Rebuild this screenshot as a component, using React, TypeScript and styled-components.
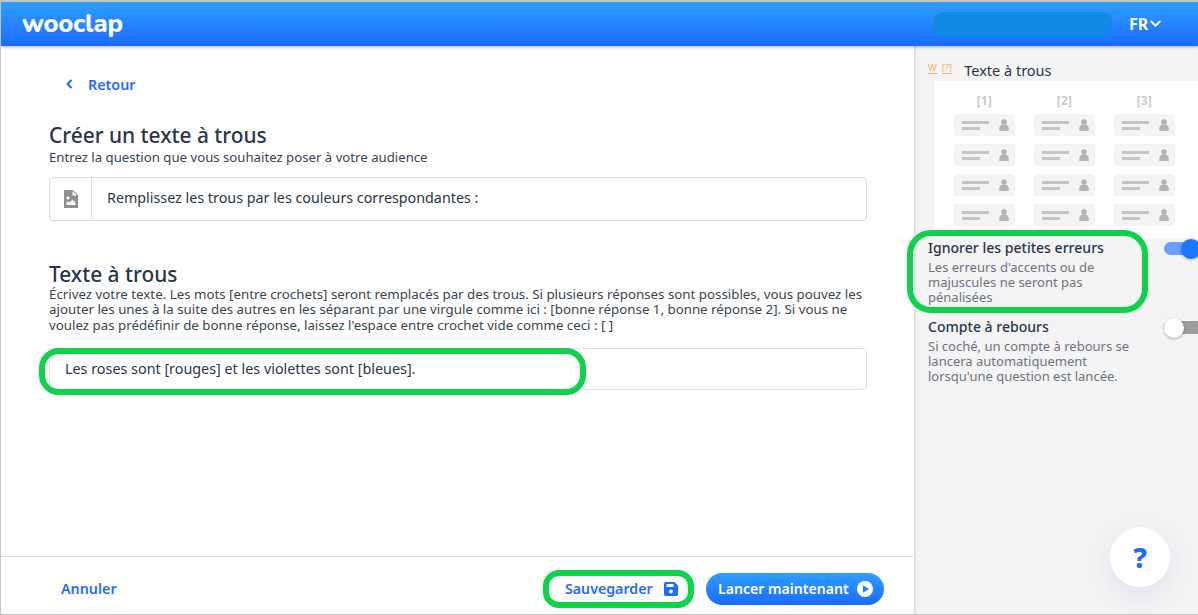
import React from "react";
import styled, { createGlobalStyle } from "styled-components";

const Global = createGlobalStyle`
  html, body { margin: 0; padding: 0; background: #fff; }
  * { box-sizing: border-box; }
  body { font-family: "Noto Sans", "Open Sans", sans-serif; color: #2a3547; }
`;

const Frame = styled.div`
  position: relative;
  width: 1198px;
  height: 615px;
  overflow: hidden;
  display: flex;
  flex-direction: column;
  border-top: 2px solid #c4c4c4;
  border-left: 1px solid #c4c4c4;
  border-bottom: 1px solid #c4c4c4;
`;

const Header = styled.header`
  position: relative;
  z-index: 3;
  height: 44px;
  flex: none;
  display: flex;
  align-items: center;
  padding-left: 21px;
  background: linear-gradient(#2f9fff, #1a6bff);
  box-shadow: 0 1px 3px rgba(0, 0, 0, 0.3);
`;

const Logo = styled.div`
  font-family: "Nunito", "Open Sans", sans-serif;
  font-weight: 800;
  font-size: 25.5px;
  letter-spacing: -0.2px;
  color: #fff;
  margin-top: -2px;
`;

const Pill = styled.div`
  width: 180px;
  height: 24px;
  border-radius: 12px;
  background: #118ae6;
  margin-left: auto;
`;

const Lang = styled.div`
  display: flex;
  align-items: center;
  gap: 2px;
  width: 85px;
  padding-left: 16px;
  color: #fff;
  font-weight: 700;
  font-size: 16px;
`;

const Body = styled.div`
  flex: 1;
  display: flex;
  min-height: 0;
`;

const Main = styled.main`
  width: 913px;
  flex: none;
  display: flex;
  flex-direction: column;
`;

const Content = styled.div`
  flex: 1;
  padding: 28px 47px 0 48px;
`;

const Back = styled.a`
  display: flex;
  align-items: center;
  height: 20px;
  margin-left: 17px;
  gap: 15px;
  color: #1f6bff;
  font-size: 14.3px;
  font-weight: 600;
`;

const Title = styled.h2`
  margin: 0;
  font-size: 20.9px;
  line-height: 25px;
  font-weight: 500;
  color: #2a3547;
`;

const FirstTitle = styled(Title)`
  margin-top: 29px;
`;

const SecondTitle = styled(Title)`
  margin-top: 41px;
`;

const Hint = styled.p`
  margin: 0;
  font-size: 13.2px;
  line-height: 15.5px;
  color: #3a4352;
`;

const FirstHint = styled(Hint)`
  margin-top: 2px;
`;

const LongHint = styled(Hint)`
  font-size: 13.3px;
`;

const QuestionBox = styled.div`
  display: flex;
  height: 44px;
  margin-top: 11px;
  border: 1px solid #dcdcdc;
  border-radius: 4px;
`;

const IconCell = styled.div`
  width: 42px;
  flex: none;
  display: flex;
  align-items: center;
  justify-content: center;
  border-right: 1px solid #dcdcdc;
`;

const QuestionText = styled.div`
  display: flex;
  align-items: center;
  padding: 0 0 2px 15px;
  font-size: 14.3px;
  color: #2a3547;
`;

const AnswerBox = styled.div`
  display: flex;
  align-items: center;
  height: 42px;
  margin-top: 15px;
  padding: 0 0 2px 15px;
  border: 1px solid #e2e2e2;
  border-radius: 4px;
  font-size: 14.35px;
  color: #2a3547;
`;

const Footer = styled.footer`
  height: 58px;
  flex: none;
  display: flex;
  align-items: center;
  padding: 6px 30px 0 60px;
  border-top: 1px solid #dcdcdc;
`;

const Cancel = styled.a`
  color: #1f6bff;
  font-size: 14.3px;
  font-weight: 600;
  margin-right: auto;
`;

const SaveButton = styled.button`
  display: flex;
  align-items: center;
  justify-content: space-between;
  width: 138px;
  height: 32px;
  padding: 0 9px 0 14px;
  background: #fff;
  border: 1px solid #e3e3e3;
  border-radius: 16px;
  font: 600 14.2px "Noto Sans", sans-serif;
  color: #1f6bff;
`;

const RunButton = styled.button`
  display: flex;
  align-items: center;
  justify-content: space-between;
  width: 178px;
  height: 32px;
  margin-left: 18px;
  padding: 0 11px 0 12px;
  background: linear-gradient(#2f9fff, #1a6bff);
  border: 0;
  border-radius: 16px;
  font: 600 14.1px "Noto Sans", sans-serif;
  color: #fff;
`;

const Side = styled.aside`
  flex: 1;
  min-width: 0;
  position: relative;
  background: #f4f4f4;
  box-shadow: inset 3px 0 3px -2px rgba(0, 0, 0, 0.16);
  padding-top: 13px;
`;

const SideHead = styled.div`
  display: flex;
  align-items: center;
  height: 22px;
  padding-left: 14px;
`;

const Mark = styled.span`
  font-size: 9.5px;
  line-height: 11px;
  color: #f3b26b;
  border-bottom: 1px solid #f3b26b;
  margin-right: 5px;
  margin-top: -4px;
`;

const SideTitle = styled.span`
  font-size: 14.5px;
  margin-left: 7px;
  color: #2a3547;
`;

const Preview = styled.div`
  display: grid;
  grid-template-columns: repeat(3, 61px);
  align-content: start;
  column-gap: 19px;
  row-gap: 8px;
  width: 264px;
  height: 157px;
  margin-left: 20px;
  padding: 11px 20px 0;
  background: #fff;
`;

const PreviewLabel = styled.div`
  height: 14px;
  text-align: center;
  font-size: 11.5px;
  line-height: 18px;
  font-weight: 700;
  letter-spacing: 0.5px;
  color: #c6c8cc;
`;

const PreviewCard = styled.div`
  position: relative;
  height: 22px;
  background: #f4f4f4;
  border-radius: 3px;
  display: flex;
  align-items: center;
  justify-content: space-between;
  padding: 0 6px 0 8px;
`;

const Lines = styled.div`
  display: flex;
  flex-direction: column;
  gap: 3px;
`;

const Line = styled.div<{ $w: number }>`
  height: 3px;
  width: ${(p) => p.$w}px;
  background: #c4c5c8;
`;

const Option = styled.div`
  position: relative;
  padding: 0 0 0 14px;
  width: 100%;
`;

const OptionTitle = styled.div`
  font-size: 14.05px;
  line-height: 18px;
  font-weight: 500;
  color: #2a3547;
`;

const OptionText = styled.div`
  font-size: 13px;
  line-height: 15px;
  width: 205px;
  margin-top: 3px;
  color: #6c7380;
`;

const FirstOption = styled(Option)`
  margin-top: 1px;
`;

const SecondOption = styled(Option)`
  margin-top: 13px;
`;

const Track = styled.div<{ $on: boolean }>`
  position: absolute;
  left: 250px;
  top: 3px;
  width: 40px;
  height: 13px;
  border-radius: 7px;
  background: ${(p) => (p.$on ? "#6b9fff" : "#9c9c9c")};
`;

const Knob = styled.div<{ $on: boolean }>`
  position: absolute;
  left: ${(p) => (p.$on ? 17 : 0)}px;
  top: -3.5px;
  width: 20px;
  height: 20px;
  border-radius: 50%;
  background: ${(p) => (p.$on ? "#1a78ff" : "#fff")};
  box-shadow: 0 1px 3px rgba(0, 0, 0, 0.3);
`;

const Help = styled.div`
  position: absolute;
  left: 196px;
  top: 481px;
  width: 60px;
  height: 60px;
  border-radius: 50%;
  background: #fff;
  display: flex;
  align-items: center;
  justify-content: center;
  color: #1a6bff;
  font-size: 28px;
  font-weight: 800;
  box-shadow: 0 8px 24px rgba(80, 90, 220, 0.12);
`;

const Ring = styled.div<{ $x: number; $y: number; $w: number; $h: number; $r: number }>`
  position: absolute;
  z-index: 5;
  left: ${(p) => p.$x}px;
  top: ${(p) => p.$y}px;
  width: ${(p) => p.$w}px;
  height: ${(p) => p.$h}px;
  border: 6.5px solid #0fd14a;
  border-radius: ${(p) => p.$r}px;
  pointer-events: none;
`;

const Person = () => (
  <svg width="10" height="12" viewBox="0 0 10 12">
    <circle cx="5" cy="3" r="2.8" fill="#b3b4b8" />
    <path d="M0.3 12V9.2C0.3 6.8 2.4 5.2 5 5.2s4.7 1.6 4.7 4V12z" fill="#b3b4b8" />
  </svg>
);

const columns = ["[1]", "[2]", "[3]"];
const rows = [0, 1, 2, 3];

export default function App() {
  return (
    <>
      <Global />
      <Frame>
        <Header>
          <Logo>wooclap</Logo>
          <Pill />
          <Lang>
            FR
            <svg width="11" height="8" viewBox="0 0 11 8">
              <path d="M1.2 1.5 5.5 5.8 9.8 1.5" fill="none" stroke="#fff" strokeWidth="2" strokeLinecap="round" strokeLinejoin="round" />
            </svg>
          </Lang>
        </Header>
        <Body>
          <Main>
            <Content>
              <Back>
                <svg width="7" height="10" viewBox="0 0 7 10">
                  <path d="M5.5 1 1.5 5 5.5 9" fill="none" stroke="#1f6bff" strokeWidth="2" />
                </svg>
                Retour
              </Back>
              <FirstTitle>Créer un texte à trous</FirstTitle>
              <FirstHint>Entrez la question que vous souhaitez poser à votre audience</FirstHint>
              <QuestionBox>
                <IconCell>
                  <svg width="14" height="18" viewBox="0 0 14 18">
                    <path d="M0 0H9L14 5V18H0zM8.5 1V5.5H13z" fill="#8f8f8f" fillRule="evenodd" />
                    <circle cx="4" cy="8" r="1.6" fill="#fff" />
                    <path d="M2.5 15V12.6L4 11.2 5.5 12.6 8.5 9.6 11.5 12.6V15z" fill="#fff" />
                  </svg>
                </IconCell>
                <QuestionText>Remplissez les trous par les couleurs correspondantes :</QuestionText>
              </QuestionBox>
              <SecondTitle>Texte à trous</SecondTitle>
              <LongHint>
                Écrivez votre texte. Les mots [entre crochets] seront remplacés par des trous. Si plusieurs réponses sont possibles, vous pouvez les
                ajouter les unes à la suite des autres en les séparant par une virgule comme ici : [bonne réponse 1, bonne réponse 2]. Si vous ne
                voulez pas prédéfinir de bonne réponse, laissez l'espace entre crochet vide comme ceci : [ ]
              </LongHint>
              <AnswerBox>Les roses sont [rouges] et les violettes sont [bleues].</AnswerBox>
            </Content>
            <Footer>
              <Cancel>Annuler</Cancel>
              <SaveButton>
                Sauvegarder
                <svg width="14" height="14" viewBox="0 0 14 14">
                  <path d="M2 0H10.5L14 3.5V12a2 2 0 0 1-2 2H2a2 2 0 0 1-2-2V2a2 2 0 0 1 2-2z" fill="#1f6bff" />
                  <rect x="2.5" y="2" width="7" height="3" fill="#fff" />
                  <circle cx="7" cy="9.5" r="2" fill="#fff" />
                </svg>
              </SaveButton>
              <RunButton>
                Lancer maintenant
                <svg width="16" height="16" viewBox="0 0 16 16">
                  <circle cx="8" cy="8" r="8" fill="#fff" />
                  <path d="M6 4.2 12 8 6 11.8z" fill="#1f7bff" />
                </svg>
              </RunButton>
            </Footer>
          </Main>
          <Side>
            <SideHead>
              <Mark>W</Mark>
              <Mark>[?]</Mark>
              <SideTitle>Texte à trous</SideTitle>
            </SideHead>
            <Preview>
              {columns.map((c) => (
                <PreviewLabel key={c}>{c}</PreviewLabel>
              ))}
              {rows.map((r) =>
                columns.map((c) => (
                  <PreviewCard key={`${r}${c}`}>
                    <Lines>
                      <Line $w={27} />
                      <Line $w={18} />
                    </Lines>
                    <Person />
                  </PreviewCard>
                ))
              )}
            </Preview>
            <FirstOption>
              <OptionTitle>Ignorer les petites erreurs</OptionTitle>
              <Track $on>
                <Knob $on />
              </Track>
              <OptionText>Les erreurs d'accents ou de majuscules ne seront pas pénalisées</OptionText>
            </FirstOption>
            <SecondOption>
              <OptionTitle>Compte à rebours</OptionTitle>
              <Track $on={false}>
                <Knob $on={false} />
              </Track>
              <OptionText>Si coché, un compte à rebours se lancera automatiquement lorsqu'une question est lancée.</OptionText>
            </SecondOption>
            <Help>?</Help>
          </Side>
        </Body>
        <Ring $x={38} $y={346} $w={547} $h={47} $r={20} />
        <Ring $x={906} $y={228} $w={241} $h={83} $r={24} />
        <Ring $x={542} $y={568} $w={151} $h={38} $r={16} />
      </Frame>
    </>
  );
}
